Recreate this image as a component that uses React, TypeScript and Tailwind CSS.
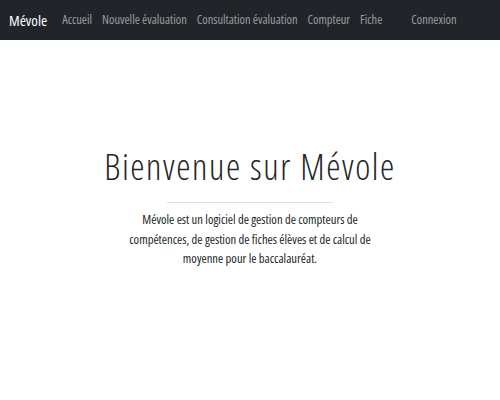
export default function App() {
  const links = ["Accueil", "Nouvelle évaluation", "Consultation évaluation", "Compteur", "Fiche"];
  return (
    <div className="min-h-[400px] bg-white text-[#212529] font-['Open_Sans',sans-serif] [font-stretch:75%]">
      <nav className="flex h-10 items-center bg-[#212529] pl-[9px]">
        <span className="mr-[15px] text-[15px] text-white">Mévole</span>
        <ul className="flex items-center gap-[10px] text-[12.4px] text-[#9a9da0]">
          {links.map((l) => (
            <li key={l}>{l}</li>
          ))}
          <li className="ml-[19px]">Connexion</li>
        </ul>
      </nav>
      <main className="flex flex-col items-center pt-[103px]">
        <h1 className="text-[36px] font-light leading-[48px] tracking-[1.6px]">Bienvenue sur Mévole</h1>
        <hr className="mt-[11px] w-[166px] border-t border-[#e0e0e0]" />
        <p className="mt-[7px] w-[270px] text-center text-[12.6px] leading-[19.5px]">
          Mévole est un logiciel de gestion de compteurs de compétences, de gestion de fiches élèves et de calcul de moyenne pour le baccalauréat.
        </p>
      </main>
    </div>
  );
}
